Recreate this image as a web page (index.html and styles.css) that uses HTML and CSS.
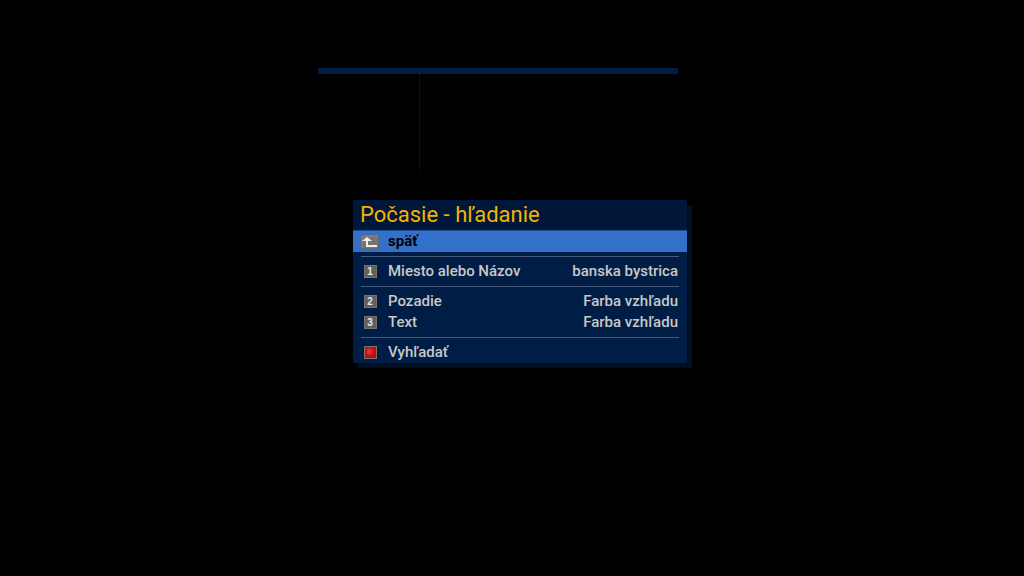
FILE: index.html
```
<!DOCTYPE html>
<html lang="sk">
<head>
  <meta charset="UTF-8">
  <meta name="viewport" content="width=device-width, initial-scale=1.0">
  <title>Počasie - hľadanie</title>
  <link rel="stylesheet" href="styles.css">
</head>
<body>
  <div class="infobox">
    <div class="infobox-head"></div>
    <div class="infobox-body">
      <div class="infobox-side"></div>
    </div>
  </div>

  <main class="menu">
    <h1>Počasie - hľadanie</h1>

    <button class="row selected" type="button">
      <svg class="icon-back" viewBox="0 0 20 16" aria-hidden="true">
        <rect x="1" y="1" width="18" height="14" rx="1" fill="#747474" stroke="#5a6270"/>
        <path d="M2 14V2H18" fill="none" stroke="#8a8a8a"/>
        <path d="M7 3L12 7H8V11H17V13H6V7H2Z" fill="#f0f0f0"/>
      </svg>
      <span class="label">späť</span>
    </button>

    <hr>

    <button class="row" type="button">
      <span class="key">1</span>
      <span class="label">Miesto alebo Názov</span>
      <span class="value">banska bystrica</span>
    </button>

    <hr>

    <button class="row" type="button">
      <span class="key">2</span>
      <span class="label">Pozadie</span>
      <span class="value">Farba vzhľadu</span>
    </button>
    <button class="row" type="button">
      <span class="key">3</span>
      <span class="label">Text</span>
      <span class="value">Farba vzhľadu</span>
    </button>

    <hr>

    <button class="row" type="button">
      <span class="key red"></span>
      <span class="label">Vyhľadať</span>
    </button>
  </main>
</body>
</html>
```
FILE: styles.css
```
* {
  margin: 0;
  padding: 0;
  box-sizing: border-box;
}

body {
  display: flex;
  flex-direction: column;
  align-items: center;
  gap: 30px;
  min-height: 100vh;
  padding: 68px 16px 0;
  background: #000;
  color: #c8c8c8;
  font-family: Roboto, "Liberation Sans", sans-serif;
}

/* empty info window behind the menu */
.infobox {
  width: 100%;
  max-width: 360px;
  margin-right: 28px;
}

.infobox-head {
  height: 6px;
  background: #001d43;
}

.infobox-body {
  display: grid;
  grid-template-columns: 102px 1fr;
}

.infobox-side {
  height: 96px;
  border-right: 1px solid #071128;
}

.menu {
  width: 100%;
  max-width: 334px;
  margin-left: 16px;
  background: #001e45;
  box-shadow: 5px 5px 0 #000e22;
}

h1 {
  padding: 0 7px;
  background: #00173a;
  color: #f0b400;
  font-size: 22px;
  font-weight: 400;
  line-height: 30px;
}

.row {
  display: grid;
  grid-template-columns: 20px 1fr auto;
  column-gap: 8px;
  align-items: center;
  justify-items: center;
  width: 100%;
  padding: 0 9px 0 7px;
  background: none;
  border: none;
  color: #c8c8c8;
  font-family: inherit;
  font-size: 15px;
  font-weight: 500;
  line-height: 21px;
  cursor: pointer;
}

.row.selected,
.row:focus {
  background: #3370cc;
  color: #000;
  outline: none;
}

.row.selected {
  border-top: 1px solid #1f4d94;
  font-weight: 700;
}

.label {
  justify-self: start;
}

.icon-back {
  width: 20px;
  height: 16px;
}

.key {
  width: 13px;
  height: 13px;
  border: 1px solid #77716b;
  background: #606060;
  color: #e6e6e6;
  font-family: "Liberation Sans", sans-serif;
  font-size: 10px;
  font-weight: 700;
  line-height: 11px;
  text-align: center;
}

.key.red {
  border-color: #80706c;
  background: radial-gradient(circle at 40% 40%, #e04040, #c41414 45%, #a80808);
}

hr {
  height: 9px;
  margin: 0 8px;
  border: none;
  background: linear-gradient(#46597a, #46597a) center / 100% 1px no-repeat;
}
```
